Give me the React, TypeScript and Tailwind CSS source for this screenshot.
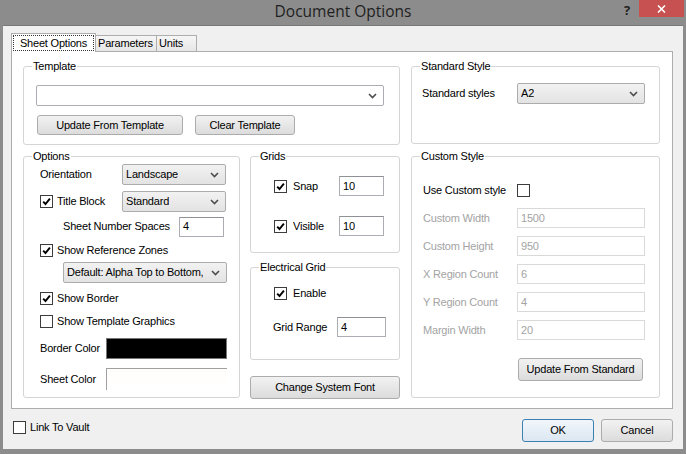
import type { ReactNode } from 'react'

function Chevron() {
  return (
    <svg width="9" height="6" viewBox="0 0 9 6" className="shrink-0">
      <path d="M1 1l3.5 3.5L8 1" fill="none" stroke="#4d4d4d" strokeWidth="1.6" />
    </svg>
  )
}

function CheckBox({ checked, label, gap = 'ml-[4px]' }: { checked?: boolean; label?: string; gap?: string }) {
  return (
    <div className="flex items-center h-[13px]">
      <span className="w-[13px] h-[13px] shrink-0 border border-[#3c3c3c] bg-white flex items-center justify-center">
        {checked && (
          <svg width="9" height="9" viewBox="0 0 9 9">
            <path d="M1.2 4.6l2.3 2.4L7.9 1.6" fill="none" stroke="#000" strokeWidth="1.9" />
          </svg>
        )}
      </span>
      {label && <span className={`${gap} leading-[13px] whitespace-nowrap`}>{label}</span>}
    </div>
  )
}

function Combo({ value, width, editable }: { value: string; width: string; editable?: boolean }) {
  return (
    <div
      className={`${width} h-[21px] flex items-center justify-between pl-[3px] pr-[6px] border rounded-[2px] ${
        editable ? 'bg-white border-[#abadb3]' : 'bg-gradient-to-b from-[#f2f2f2] to-[#e3e3e3] border-[#acacac]'
      }`}
    >
      <span className="whitespace-nowrap overflow-hidden">{value}</span>
      <Chevron />
    </div>
  )
}

function TextBox({ value, width, disabled }: { value: string; width: string; disabled?: boolean }) {
  return (
    <div
      className={`${width} h-[20px] flex items-center pl-[3px] bg-white border ${
        disabled ? 'border-[#d9d9d9] text-[#a3a3a3]' : 'border-[#abadb3] border-t-[#8f9196]'
      }`}
    >
      {value}
    </div>
  )
}

function Btn({ label, width, height = 'h-[20px]', primary }: { label: string; width: string; height?: string; primary?: boolean }) {
  return (
    <div
      className={`${width} ${height} flex items-center justify-center rounded-[3px] border whitespace-nowrap ${
        primary
          ? 'border-[#3c7fb1] bg-gradient-to-b from-[#f1f6fb] to-[#dbe7f2]'
          : 'border-[#acacac] bg-gradient-to-b from-[#f2f2f2] to-[#dcdcdc]'
      }`}
    >
      {label}
    </div>
  )
}

function GroupBox({ title, className, children }: { title: string; className: string; children?: ReactNode }) {
  return (
    <div className={`relative border border-[#d5d5d5] rounded-[3px] ${className}`}>
      <span className="absolute left-[8px] -top-[7px] bg-white px-[1px] leading-[13px] whitespace-nowrap">{title}</span>
      {children}
    </div>
  )
}

function Tab({ label, width, active }: { label: string; width: string; active?: boolean }) {
  if (active) {
    return (
      <div className={`${width} h-[19px] -mb-[1px] relative z-10 bg-white border border-b-0 border-[#adadad] p-[1px]`}>
        <div className="h-full border border-dotted border-[#333] flex items-center justify-center">{label}</div>
      </div>
    )
  }
  return (
    <div
      className={`${width} h-[16px] border border-l-0 border-b-0 border-[#adadad] bg-gradient-to-b from-[#f6f6f6] to-[#e6e6e6] flex items-center pl-[2px]`}
    >
      <span>{label}</span>
    </div>
  )
}

export default function App() {
  const customRows = [
    ['Custom Width', '1500'],
    ['Custom Height', '950'],
    ['X Region Count', '6'],
    ['Y Region Count', '4'],
    ['Margin Width', '20'],
  ]

  return (
    <div className="w-[686px] h-[454px] bg-[#8c8c8c] flex flex-col overflow-hidden font-['Liberation_Sans',Arial,sans-serif] text-[11px] tracking-[-0.2px] text-black">
      {/* title bar */}
      <div className="relative h-[25px] shrink-0 flex items-center justify-center">
        <span className="font-['Open_Sans','Noto_Sans',sans-serif] text-[15.5px] tracking-normal text-[#1f1f1f] -mt-[2px]">Document Options</span>
        <div className="absolute right-[2px] top-0 flex items-start">
          <span className="mt-[1px] mr-[9px] font-bold text-[13px] text-[#222] font-['Open_Sans',sans-serif]">?</span>
          <div className="w-[45px] h-[17px] bg-[#c75050] flex items-center justify-center">
            <svg width="9" height="8" viewBox="0 0 9 8">
              <path d="M1 0.5l7 7M8 0.5l-7 7" stroke="#fff" strokeWidth="1.6" />
            </svg>
          </div>
        </div>
      </div>

      {/* dialog body */}
      <div className="mx-[3px] h-[424px] shrink-0 bg-[#f0f0f0] border-t border-[#777] px-[8px] pt-[7px]">
        <div className="flex items-end h-[18px]">
          <Tab label="Sheet Options" width="w-[85px]" active />
          <Tab label="Parameters" width="w-[61px]" />
          <Tab label="Units" width="w-[40px]" />
        </div>

        <div className="w-[662px] h-[358px] border border-[#adadad] bg-white pt-[14px] pl-[11px]">
          {/* top row */}
          <div className="flex items-start">
            <GroupBox title="Template" className="w-[377px] h-[79px] pt-[18px] pl-[12px]">
              <Combo value="" width="w-[348px]" editable />
              <div className="flex mt-[9px] ml-[1px]">
                <Btn label="Update From Template" width="w-[146px]" />
                <Btn label="Clear Template" width="w-[100px] ml-[12px]" />
              </div>
            </GroupBox>
            <GroupBox title="Standard Style" className="w-[249px] h-[78px] ml-[11px] pt-[16px] pl-[10px]">
              <div className="flex items-center h-[21px]">
                <span className="w-[95px]">Standard styles</span>
                <Combo value="A2" width="w-[128px]" />
              </div>
            </GroupBox>
          </div>

          {/* bottom row */}
          <div className="flex items-start mt-[11px]">
            <GroupBox title="Options" className="w-[217px] h-[242px] pt-[7px] pl-[16px]">
              <div className="flex items-center h-[21px]">
                <span className="w-[82px]">Orientation</span>
                <Combo value="Landscape" width="w-[104px]" />
              </div>
              <div className="flex items-center h-[21px] mt-[6px]">
                <div className="w-[82px]">
                  <CheckBox checked label="Title Block" />
                </div>
                <Combo value="Standard" width="w-[104px]" />
              </div>
              <div className="flex items-center h-[21px] mt-[4px] ml-[23px]">
                <span className="w-[116px]">Sheet Number Spaces</span>
                <TextBox value="4" width="w-[45px]" />
              </div>
              <div className="mt-[7px]">
                <CheckBox checked label="Show Reference Zones" />
              </div>
              <div className="mt-[5px] ml-[23px]">
                <Combo value="Default: Alpha Top to Bottom," width="w-[164px]" />
              </div>
              <div className="mt-[9px]">
                <CheckBox checked label="Show Border" />
              </div>
              <div className="mt-[10px]">
                <CheckBox label="Show Template Graphics" />
              </div>
              <div className="flex items-center h-[21px] mt-[10px]">
                <span className="w-[66px]">Border Color</span>
                <div className="w-[121px] h-[21px] bg-black border border-[#777]" />
              </div>
              <div className="flex items-center h-[22px] mt-[9px]">
                <span className="w-[66px]">Sheet Color</span>
                <div className="w-[121px] h-[22px] bg-gradient-to-b from-[#fffdfb] to-white border-t border-l border-[#a0a0a0]" />
              </div>
            </GroupBox>

            <div className="w-[150px] ml-[10px] flex flex-col">
              <GroupBox title="Grids" className="h-[97px] pt-[19px] pl-[23px]">
                <div className="flex items-center h-[20px]">
                  <div className="w-[65px]">
                    <CheckBox checked label="Snap" gap="ml-[6px]" />
                  </div>
                  <TextBox value="10" width="w-[45px]" />
                </div>
                <div className="flex items-center h-[20px] mt-[20px]">
                  <div className="w-[65px]">
                    <CheckBox checked label="Visible" gap="ml-[6px]" />
                  </div>
                  <TextBox value="10" width="w-[45px]" />
                </div>
              </GroupBox>
              <GroupBox title="Electrical Grid" className="h-[93px] mt-[14px] pt-[19px] pl-[23px]">
                <CheckBox checked label="Enable" gap="ml-[6px]" />
                <div className="flex items-center h-[20px] mt-[17px] -ml-[1px]">
                  <span className="w-[64px]">Grid Range</span>
                  <TextBox value="4" width="w-[49px]" />
                </div>
              </GroupBox>
              <div className="mt-[16px]">
                <Btn label="Change System Font" width="w-[150px]" height="h-[23px]" />
              </div>
            </div>

            <GroupBox title="Custom Style" className="w-[249px] h-[242px] ml-[11px] pt-[27px] pl-[11px]">
              <div className="flex items-center h-[13px]">
                <span className="w-[94px]">Use Custom style</span>
                <CheckBox />
              </div>
              {customRows.map(([label, value], i) => (
                <div key={label} className={`flex items-center h-[20px] ${i === 0 ? 'mt-[11px]' : 'mt-[8px]'}`}>
                  <span className="w-[94px] text-[#a3a3a3]">{label}</span>
                  <TextBox value={value} width="w-[128px]" disabled />
                </div>
              ))}
              <div className="mt-[18px] ml-[95px]">
                <Btn label="Update From Standard" width="w-[125px]" height="h-[23px]" />
              </div>
            </GroupBox>
          </div>
        </div>

        {/* footer */}
        <div className="w-[662px] flex items-start justify-between mt-[10px]">
          <div className="ml-[2px] mt-[2px]">
            <CheckBox label="Link To Vault" />
          </div>
          <div className="flex">
            <Btn label="OK" width="w-[72px]" height="h-[23px]" primary />
            <Btn label="Cancel" width="w-[72px] ml-[7px]" height="h-[23px]" />
          </div>
        </div>
      </div>
    </div>
  )
}
